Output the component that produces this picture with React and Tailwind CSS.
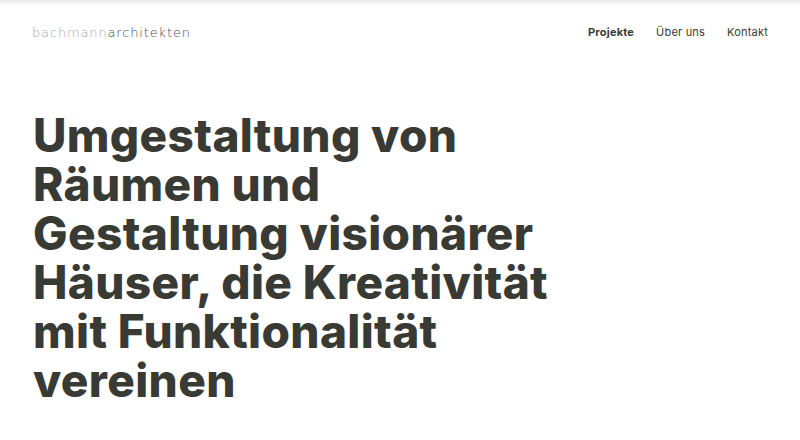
import React from "react";

const App = () => {
  const links = [
    { label: "Projekte", active: true },
    { label: "Über uns", active: false },
    { label: "Kontakt", active: false },
  ];

  const lines = [
    "Umgestaltung von",
    "Räumen und",
    "Gestaltung visionärer",
    "Häuser, die Kreativität",
    "mit Funktionalität",
    "vereinen",
  ];

  return (
    <div className="min-h-screen w-full bg-white shadow-[inset_0_5px_5px_-3px_rgba(0,0,0,0.12)] font-['Inter',sans-serif]">
      <header className="flex items-center justify-between pl-[32px] pr-[32px] pt-[24px] pb-[24px]">
        <a href="#" className="font-['DejaVu_Sans',sans-serif] text-[13px] font-extralight tracking-[0.85px] leading-none">
          <span className="text-[#a9a9a9]">bachmann</span>
          <span className="text-[#4a4a48]">architekten</span>
        </a>
        <nav className="flex items-center gap-[22px] text-[11px] tracking-[0.2px] text-[#3b3b37]">
          {links.map((l) => (
            <a key={l.label} href="#" className={l.active ? "font-bold" : "font-normal"}>
              {l.label}
            </a>
          ))}
        </nav>
      </header>
      <main className="pl-[33px] pt-[46px]">
        <h1 className="text-[46px] font-extrabold leading-[49px] tracking-[0.35px] text-[#3a3a34]">
          {lines.map((t) => (
            <span key={t} className="block">
              {t}
            </span>
          ))}
        </h1>
      </main>
    </div>
  );
};

export default App;
